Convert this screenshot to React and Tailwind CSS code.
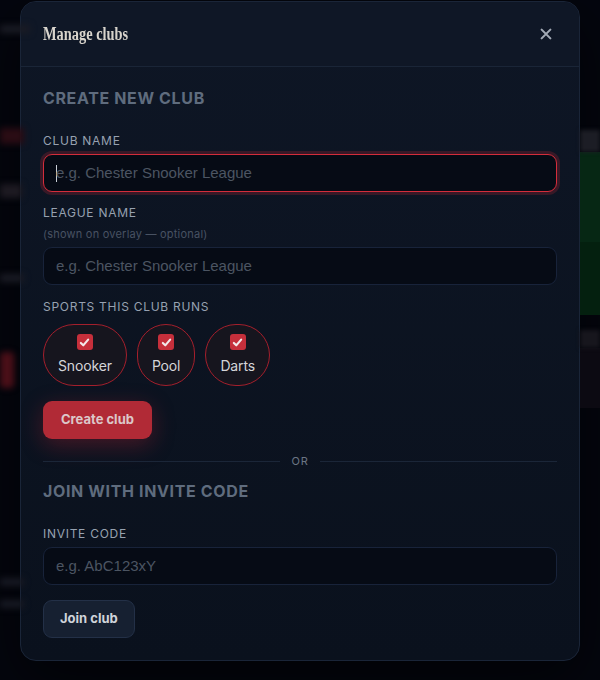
import React from "react";

const sans = { fontFamily: "Inter, 'Noto Sans', sans-serif" };

function Check() {
  return (
    <span className="flex h-[16px] w-[16px] items-center justify-center rounded-[3px] bg-[#c62f3b]">
      <svg viewBox="0 0 16 16" className="h-[13px] w-[13px]" fill="none" stroke="#f3e8ea" strokeWidth="2.6" strokeLinecap="round" strokeLinejoin="round">
        <path d="M3.5 8.5l3 3 6-7" />
      </svg>
    </span>
  );
}

function Pill({ label }) {
  return (
    <div className="flex flex-col items-center gap-[6px] rounded-full border border-[#a41f2c] bg-[#16151e] px-[14px] py-[9px]">
      <Check />
      <span className="text-[14px] leading-[20px] tracking-[-0.01em] text-[#d4d4d8]">{label}</span>
    </div>
  );
}

function Label({ children, className = "" }) {
  return (
    <div className={"text-[12px] leading-[16px] tracking-[0.06em] text-[#97a1b0] " + className}>{children}</div>
  );
}

function Input({ placeholder, focused, className = "" }) {
  return (
    <div
      className={
        "flex h-[38px] items-center rounded-[9px] px-[12px] " +
        (focused
          ? "border border-[#d42d3b] bg-[#060b15] shadow-[0_0_0_3px_rgba(170,35,50,0.28)] "
          : "border border-[#18233a] bg-[#060b15] ") +
        className
      }
    >
      {focused && <span className="mr-[-1px] h-[17px] w-[1px] bg-[#c9ced6]" />}
      <span className="text-[15px] text-[#4c5562]" style={{ fontFamily: "'Liberation Sans', Arial, sans-serif" }}>
        {placeholder}
      </span>
    </div>
  );
}

function LeftStrip() {
  return (
    <div className="flex w-[20px] shrink-0 flex-col blur-[3px]">
      <div className="mt-[25px] h-[8px] w-[30px] bg-[#1a1b24]" />
      <div className="mt-[95px] h-[16px] w-[24px] bg-[#2a0c14]" />
      <div className="mt-[40px] h-[14px] w-[22px] bg-[#1d1a22]" />
      <div className="mt-[76px] h-[8px] w-[24px] bg-[#1a1b24]" />
      <div className="mt-[70px] h-[36px] w-[14px] rounded bg-[#4a0f18]" />
      <div className="mt-[190px] h-[8px] w-[24px] bg-[#171923]" />
      <div className="mt-[14px] h-[8px] w-[24px] bg-[#171923]" />
    </div>
  );
}

function RightStrip() {
  return (
    <div className="flex w-[20px] shrink-0 flex-col">
      <div className="mt-[130px] h-[22px] w-full bg-[#1c1d25] blur-[2px]" />
      <div className="h-[90px] w-full bg-[#062714]" />
      <div className="h-[73px] w-full bg-[#04200f]" />
      <div className="mt-[15px] h-[18px] w-full bg-[#17161d] blur-[2px]" />
      <div className="h-[60px] w-full bg-[#0c0a12]" />
    </div>
  );
}

export default function App() {
  return (
    <div className="flex min-h-[680px] w-full overflow-hidden bg-[#04060e]" style={sans}>
      <LeftStrip />

      <div className="mt-[1px] h-fit w-[560px] shrink-0 overflow-hidden rounded-[16px] border border-[#1a2538] bg-gradient-to-b from-[#0e1625] to-[#0a111d] shadow-[0_20px_60px_rgba(0,0,0,0.6)]">
        <div className="flex h-[65px] items-center justify-between border-b border-[#1a2537] bg-[#0f1726] pl-[22px] pr-[26px]">
          <span
            className="origin-left scale-x-[0.8] text-[18px] font-bold text-[#d8d4cc]"
            style={{ fontFamily: "'Liberation Serif', 'Times New Roman', serif" }}
          >
            Manage clubs
          </span>
          <svg viewBox="0 0 16 16" className="h-[14px] w-[14px]" stroke="#a3aab5" strokeWidth="2.4" strokeLinecap="round">
            <path d="M3 3l10 10M13 3L3 13" />
          </svg>
        </div>

        <div className="px-[22px] pb-[22px] pt-[19px]">
          <div className="text-[16px] font-bold leading-[24px] tracking-[0.04em] text-[#5f6c7e]">CREATE NEW CLUB</div>

          <Label className="mt-[23px]">CLUB NAME</Label>
          <Input className="mt-[5px]" focused placeholder="e.g. Chester Snooker League" />

          <Label className="mt-[13px]">LEAGUE NAME</Label>
          <div className="mt-[6px] text-[11px] leading-[14px] tracking-[0.02em] text-[#485262]">(shown on overlay — optional)</div>
          <Input className="mt-[6px]" placeholder="e.g. Chester Snooker League" />

          <Label className="mt-[14px]">SPORTS THIS CLUB RUNS</Label>
          <div className="mt-[9px] flex gap-[10px]">
            <Pill label="Snooker" />
            <Pill label="Pool" />
            <Pill label="Darts" />
          </div>

          <button className="mt-[15px] flex h-[38px] items-center rounded-[9px] bg-[#b12a36] px-[18px] text-[13px] font-bold text-[#dcc7c9] shadow-[0_6px_22px_rgba(180,35,50,0.35)]">
            Create club
          </button>

          <div className="mt-[15px] flex h-[14px] items-center gap-[11px]">
            <div className="h-px flex-1 bg-[#1b2638]" />
            <span className="text-[11px] tracking-[0.08em] text-[#6b7584]">OR</span>
            <div className="h-px flex-1 bg-[#1b2638]" />
          </div>

          <div className="mt-[11px] text-[16px] font-bold leading-[24px] tracking-[0.04em] text-[#5f6c7e]">JOIN WITH INVITE CODE</div>

          <Label className="mt-[23px]">INVITE CODE</Label>
          <Input className="mt-[5px]" placeholder="e.g. AbC123xY" />

          <button className="mt-[15px] flex h-[38px] items-center rounded-[9px] border border-[#233047] bg-[#162031] px-[16px] text-[13px] font-bold text-[#cfd3da]">
            Join club
          </button>
        </div>
      </div>

      <RightStrip />
    </div>
  );
}
